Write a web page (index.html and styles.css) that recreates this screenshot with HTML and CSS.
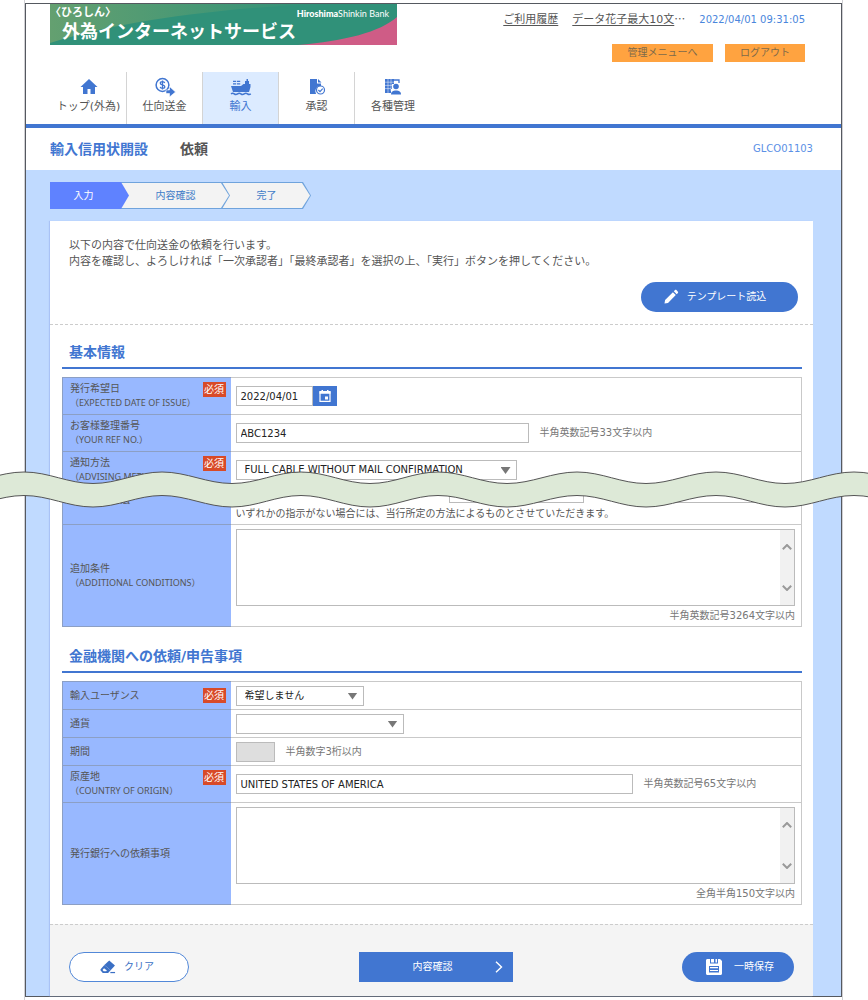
FILE: index.html
```html
<!DOCTYPE html>
<html lang="ja">
<head>
<meta charset="utf-8">
<meta name="viewport" content="width=device-width, initial-scale=1">
<title>輸入信用状開設 依頼</title>
<link rel="stylesheet" href="styles.css">
</head>
<body>
<div class="sheet">
<div class="frame">
  <header class="header">
    <div class="brand">
      <svg class="brand-bg" viewBox="0 0 347 41" preserveAspectRatio="none" aria-hidden="true">
        <defs><linearGradient id="leaf" x1="0" y1="0" x2="1" y2="0"><stop offset="0" stop-color="#64a070"/><stop offset="1" stop-color="#2f9179"/></linearGradient></defs>
        <rect width="347" height="41" fill="#309179"/>
        <path d="M0 0H270C190 3 80 14 0 39Z" fill="url(#leaf)"/>
        <path d="M347 13C330 28 295 37 248 41H347Z" fill="#cf5c86"/>
      </svg>
      <div class="brand-text">
        <div class="brand-row"><span class="brand-sub">〈ひろしん〉</span><span class="brand-bank"><b>Hiroshima</b>Shinkin Bank</span></div>
        <div class="brand-name">外為インターネットサービス</div>
      </div>
    </div>
    <div class="account">
      <div class="account-links">
        <a href="#">ご利用履歴</a>
        <span><a href="#">データ花子最大10文</a><span class="more">…</span></span>
        <time class="clock">2022/04/01 09:31:05</time>
      </div>
      <div class="account-buttons">
        <button type="button" class="orange orange-wide">管理メニューへ</button>
        <button type="button" class="orange">ログアウト</button>
      </div>
    </div>
  </header>

  <nav class="nav">
    <a href="#" class="tab">
      <svg width="22" height="20" viewBox="0 0 22 20" aria-hidden="true"><path d="M11 2 2.500 10H5v7h4.500v-5h3v5H17v-7h2.500Z" fill="#4176d1"/></svg>
      <span>トップ(外為)</span></a>
    <a href="#" class="tab">
      <svg width="22" height="20" viewBox="0 0 22 20" aria-hidden="true"><circle cx="8.500" cy="8" r="6.400" fill="none" stroke="#4176d1" stroke-width="1.500"/><path d="M10.700 6C10.400 5 9.600 4.700 8.500 4.700 7.100 4.700 6.300 5.300 6.300 6.300 6.300 8.600 10.800 7.300 10.800 9.700 10.800 10.800 9.900 11.300 8.500 11.300 7.300 11.300 6.400 10.900 6.200 9.900M8.500 3.500v9" fill="none" stroke="#4176d1" stroke-width="1.300"/><path d="M12 13h3.500v-3.500l6 5.500-6 5v-3.500H12Z" fill="#4176d1" stroke="#fff" stroke-width=".6"/></svg>
      <span>仕向送金</span></a>
    <a href="#" class="tab tab-active" aria-current="page">
      <svg width="22" height="20" viewBox="0 0 22 20" aria-hidden="true"><path d="M1 9h10l2.500-2H15V4h1.500V2H18v2h1v3h1.500v3L19 15H3Z" fill="#4176d1"/><path d="M3 4.300h8M3 6.800h8" stroke="#4176d1" stroke-width="1.300" stroke-dasharray="3.200 .8"/><path d="M1 16.800q1.700-1.300 3.300 0t3.300 0 3.300 0 3.300 0 3.300 0 3.300 0" fill="none" stroke="#4176d1" stroke-width="1.500"/></svg>
      <span>輸入</span></a>
    <a href="#" class="tab">
      <svg width="22" height="20" viewBox="0 0 22 20" aria-hidden="true"><path d="M4 2h7v4.500h4V9a5.300 5.300 0 0 0-5 8H4Z" fill="#4176d1"/><path d="M12 2l3.500 3.500H12Z" fill="#4176d1"/><circle cx="14.500" cy="13" r="4" fill="#fff" stroke="#4176d1" stroke-width="1.200"/><path d="m12.400 13 1.600 1.600 2.700-3" fill="none" stroke="#4176d1" stroke-width="1.200"/></svg>
      <span>承認</span></a>
    <a href="#" class="tab tab-last">
      <svg width="22" height="20" viewBox="0 0 22 20" aria-hidden="true"><path d="M3 2h9v5h-2v5H9v4H3Z" fill="#4176d1"/><path d="M3 5.200h9M3 8.400h7M3 11.600h6M6 2v14M9 2v12" stroke="#fff" stroke-width=".5"/><path d="M12 3h5v3" fill="none" stroke="#4176d1" stroke-width="1.300"/><circle cx="14" cy="9.500" r="2.800" fill="#4176d1"/><path d="M9 17.500c0-3 2-4 5-4s5 1 5 4Z" fill="#4176d1"/></svg>
      <span>各種管理</span></a>
  </nav>

  <div class="titlebar">
    <h1 class="title">輸入信用状開設<span class="title-kind">依頼</span></h1>
    <span class="screen-id">GLCO01103</span>
  </div>

  <main class="main">
    <ol class="steps">
      <li class="step step-now"><span>入力</span></li>
      <li class="step step-mid"><span>内容確認</span></li>
      <li class="step step-end"><span>完了</span></li>
    </ol>

    <form class="panel">
      <div class="intro">
        <p>以下の内容で仕向送金の依頼を行います。<br>内容を確認し、よろしければ「一次承認者」「最終承認者」を選択の上、「実行」ボタンを押してください。</p>
        <button type="button" class="pill pill-template">
          <svg width="16" height="16" viewBox="0 0 16 16" aria-hidden="true"><path d="M1.500 14.500l.6-3.500 7.800-7.800 2.900 2.900L5 13.900ZM10.800 2.300l1-1c.6-.6 1.200-.6 1.800 0l1.100 1.100c.6.6.6 1.200 0 1.800l-1 1Z" fill="#fff"/></svg>
          テンプレート読込</button>
      </div>

      <section class="section">
        <h2 class="heading">基本情報</h2>
        <table class="grid">
          <tr class="row-tall">
            <th scope="row"><div class="label"><label for="issue">発行希望日<small>（EXPECTED DATE OF ISSUE）</small></label><em class="must">必須</em></div></th>
            <td><div class="field joined"><input id="issue" class="box w-date" value="2022/04/01"><button type="button" class="calendar" aria-label="カレンダー"><svg width="12" height="12" viewBox="0 0 12 12" aria-hidden="true"><path d="M1 1.500h10V11.300H1Z" fill="none" stroke="#fff" stroke-width="1.200"/><path d="M.5 1.500h11v2.300H.5ZM2.500 0h1.500v2H2.500ZM8 0h1.500v2H8ZM6 6.500h3v3H6Z" fill="#fff"/></svg></button></div></td>
          </tr>
          <tr class="row-tall">
            <th scope="row"><div class="label"><label for="ref">お客様整理番号<small>（YOUR REF NO.）</small></label></div></th>
            <td><div class="field"><input id="ref" class="box w-ref" value="ABC1234"><span class="hint">半角英数記号33文字以内</span></div></td>
          </tr>
          <tr class="row-tall">
            <th scope="row"><div class="label"><label for="advise">通知方法<small>（ADVISING METHOD）</small></label><em class="must">必須</em></div></th>
            <td><div class="field"><span class="pick w-advise"><select id="advise"><option>FULL CABLE WITHOUT MAIL CONFIRMATION</option></select></span></div></td>
          </tr>
          <tr class="row-cut">
            <th scope="row"><div class="label"><label for="way">書類送付方法</label></div></th>
            <td><div class="cut-inputs"><input id="way" class="box"><input class="box" aria-label="送付方法の指定"></div><p class="note">いずれかの指示がない場合には、当行所定の方法によるものとさせていただきます。</p></td>
          </tr>
          <tr>
            <th scope="row"><div class="label"><label for="cond">追加条件<small>（ADDITIONAL CONDITIONS）</small></label></div></th>
            <td><div class="area"><textarea id="cond"></textarea><div class="scroll" aria-hidden="true"><svg width="10" height="6" viewBox="0 0 10 6"><path d="M.8 5.200 5 1l4.200 4.200"/></svg><svg width="10" height="6" viewBox="0 0 10 6"><path d="M.8.8 5 5 9.200.8"/></svg></div></div><p class="hint hint-right">半角英数記号3264文字以内</p></td>
          </tr>
        </table>
      </section>

      <section class="section section-next">
        <h2 class="heading">金融機関への依頼/申告事項</h2>
        <table class="grid">
          <tr class="row-short">
            <th scope="row"><div class="label"><label for="usance">輸入ユーザンス</label><em class="must">必須</em></div></th>
            <td><div class="field"><span class="pick w-usance"><select id="usance"><option>希望しません</option></select></span></div></td>
          </tr>
          <tr class="row-short">
            <th scope="row"><div class="label"><label for="cur">通貨</label></div></th>
            <td><div class="field"><span class="pick w-cur"><select id="cur"><option></option></select></span></div></td>
          </tr>
          <tr class="row-short">
            <th scope="row"><div class="label"><label for="term">期間</label></div></th>
            <td><div class="field"><input id="term" class="box w-term" disabled><span class="hint">半角数字3桁以内</span></div></td>
          </tr>
          <tr class="row-tall">
            <th scope="row"><div class="label"><label for="origin">原産地<small>（COUNTRY OF ORIGIN）</small></label><em class="must">必須</em></div></th>
            <td><div class="field"><input id="origin" class="box w-origin" value="UNITED STATES OF AMERICA"><span class="hint">半角英数記号65文字以内</span></div></td>
          </tr>
          <tr>
            <th scope="row"><div class="label"><label for="req">発行銀行への依頼事項</label></div></th>
            <td><div class="area"><textarea id="req"></textarea><div class="scroll" aria-hidden="true"><svg width="10" height="6" viewBox="0 0 10 6"><path d="M.8 5.200 5 1l4.200 4.200"/></svg><svg width="10" height="6" viewBox="0 0 10 6"><path d="M.8.8 5 5 9.200.8"/></svg></div></div><p class="hint hint-right">全角半角150文字以内</p></td>
          </tr>
        </table>
      </section>

      <div class="actions">
        <button type="reset" class="pill pill-clear">
          <svg width="16" height="14" viewBox="0 0 17 14" aria-hidden="true"><path d="M9.800.2 15.900 5.400 11.300 10.500 4.600 4.900Z" fill="#3a6fc4"/><path d="M4.600 4.900.9 9.200c-.6.700-.6 1.300 0 1.900L3 13.500h5.600l2.700-3Z" fill="#3a6fc4"/><path d="M4.300 8.200 7.300 10.700 6.600 11.600H3.900L2.700 10.200Z" fill="#fff"/><path d="M11 12.900h5" stroke="#3a6fc4" stroke-width="1.300"/></svg>
          クリア</button>
        <button type="button" class="confirm"><span>内容確認</span><svg width="8" height="12" viewBox="0 0 8 12" aria-hidden="true"><path d="M1 .8 6.500 6 1 11.200" fill="none" stroke="#fff" stroke-width="1.400"/></svg></button>
        <button type="button" class="pill pill-save">
          <svg width="16" height="16" viewBox="0 0 16 16" aria-hidden="true"><path d="M0 1.500C0 .6.600 0 1.500 0H4v4.500h8V0h2L16 2v12.500c0 .9-.6 1.500-1.500 1.500h-13C.6 16 0 15.400 0 14.500Z" fill="#fff"/><path d="M5 0h3v3.500H5ZM9.500 0H11v3.500H9.500Z" fill="#fff"/><path d="M3 7h10v6.500H3Z" fill="#4176d1"/><path d="M4 8.700h8M4 11.500h8" stroke="#fff" stroke-width="1.200"/></svg>
          一時保存</button>
      </div>
    </form>
  </main>
</div>
</div>
<svg class="wave" viewBox="0 0 868 40" preserveAspectRatio="none" aria-hidden="true">
  <path d="M-45 13.500C-20 13.500-1 2 24 2S68 13.500 93 13.500 137 2 162 2 207 13.500 232 13.500 276 2 301 2 345 13.500 370 13.500 413 2 438 2 482 13.500 507 13.500 552 2 577 2 621 13.500 646 13.500 691 2 716 2 760 13.500 785 13.500 829 2 854 2 898 13.500 923 13.500V37C898 37 879 25.500 854 25.500S810 37 785 37 741 25.500 716 25.500 671 37 646 37 602 25.500 577 25.500 532 37 507 37 463 25.500 438 25.500 395 37 370 37 326 25.500 301 25.500 257 37 232 37 187 25.500 162 25.500 118 37 93 37 49 25.500 24 25.500-20 37-45 37Z" fill="#dde9d7" stroke="#555" stroke-width="1"/>
</svg>
</body>
</html>
```

FILE: styles.css
```css
* { box-sizing: border-box; }

body {
  margin: 0;
  position: relative;
  overflow-x: hidden;
  background: #fff;
  color: #555;
  font: 10px/14px "DejaVu Sans", "Noto Sans CJK JP", sans-serif;
}

button, input, select, textarea {
  margin: 0;
  font: inherit;
  color: inherit;
  border-radius: 0;
}

button { border: 0; padding: 0; cursor: pointer; }
p, h1, h2, ol { margin: 0; padding: 0; }

.sheet {
  margin: 0 25px 0 24px;
  padding: 3px 0;
  border: solid #d0d0d4;
  border-width: 0 1px;
}

.frame { border: 1px solid #555960; }

/* header */
.header { display: flex; justify-content: space-between; padding: 0 36px 0 24px; }

.brand { position: relative; width: 347px; height: 41px; color: #fff; }
.brand-bg { position: absolute; inset: 0; width: 100%; height: 100%; }
.brand-text { position: relative; font-weight: bold; }
.brand-row { display: flex; justify-content: space-between; padding-right: 8px; height: 17px; line-height: 17px; }
.brand-sub { font-size: 11px; }
.brand-bank { font: 9px/20px Lato, sans-serif; }
.brand-bank b { font-weight: 900; }
.brand-name { padding-left: 12px; font-size: 18px; line-height: 22px; }

.account { padding-top: 8px; }
.account-links { display: flex; justify-content: flex-end; gap: 14px; height: 16px; font-size: 11px; line-height: 16px; }
.account-links a { color: #555; text-underline-offset: 2px; }
.more { font-family: "Noto Sans CJK JP", sans-serif; line-height: 1px; }
.clock { font-size: 10px; color: #4a86dc; }
.account-buttons { display: flex; justify-content: flex-end; gap: 12px; margin-top: 16px; }
.orange { width: 80px; height: 18px; background: #ffa340; color: #7d6a4a; }
.orange-wide { width: 101px; }

/* navigation */
.nav { display: flex; margin-top: 10px; padding-left: 25px; border-bottom: 4px solid #4176d1; }
.tab {
  display: flex;
  flex-direction: column;
  align-items: center;
  gap: 3px;
  width: 76px;
  height: 52px;
  padding-top: 5px;
  border-right: 1px solid #d4d4d4;
  color: #555;
  font-size: 11px;
  white-space: nowrap;
  text-decoration: none;
}
.tab-active { background: #dcebff; color: #4176d1; }
.tab-last { border-right: 0; }

.titlebar { display: flex; align-items: center; justify-content: space-between; height: 42px; padding: 0 28px 0 24px; }
.title { font-size: 14px; line-height: 20px; color: #4176d1; }
.title-kind { margin-left: 32px; color: #555; }
.screen-id { color: #5b90e6; }

/* body */
.main { padding: 12px 28px 0 24px; background: #c0daff; }

.steps { display: flex; list-style: none; line-height: 27px; text-align: center; color: #3f7cc8; }
.step {
  position: relative;
  height: 27px;
  background: #6fa3dc;
  clip-path: polygon(0 0, calc(100% - 8px) 0, 100% 50%, calc(100% - 8px) 100%, 0 100%);
}
.step span {
  display: block;
  background: #f3f3f3;
  clip-path: polygon(0 1px, calc(100% - 9px) 1px, calc(100% - 1px) 50%, calc(100% - 9px) calc(100% - 1px), 0 calc(100% - 1px));
}
.step-now { z-index: 3; width: 79px; background: #5f82ff; color: #fff; }
.step-now span { padding-right: 12px; background: #5f82ff; }
.step-mid { z-index: 2; width: 109px; margin-left: -8px; }
.step-end { width: 89px; margin-left: -8px; }

.panel { margin-top: 12px; background: #fff; box-shadow: -1px 0 1px #a9c2f5; }

.intro { padding: 17px 15px 12px 19px; border-bottom: 1px dashed #ccc; font-size: 11px; line-height: 16px; }
.intro .pill { margin: 12px 0 0 auto; }

.pill {
  display: flex;
  align-items: center;
  justify-content: center;
  gap: 8px;
  height: 30px;
  border-radius: 15px;
  background: #4176d1;
  color: #fff;
  font-size: 10px;
}
.pill-template { width: 157px; padding-right: 10px; }
.pill-clear { width: 120px; padding-right: 4px; border: 1px solid #5288d8; background: #fff; color: #3a6fc4; }
.pill-save { width: 112px; gap: 12px; padding-left: 4px; }

.section { padding: 17px 11px 0 12px; }
.section-next { padding-top: 19px; padding-bottom: 19px; }
.heading { padding: 0 7px 5px; border-bottom: 2px solid #4176d1; font-size: 14px; line-height: 20px; color: #4176d1; }

.grid { width: 100%; margin-top: 8px; border-collapse: collapse; table-layout: fixed; }
.grid th { width: 168px; padding: 0; border: 1px solid #8c9fc4; border-right: 0; background: #98b8ff; font-weight: normal; text-align: left; }
.grid td { padding: 4px 6px 3px 5px; border: 1px solid #c9c9c9; border-left: 0; }
.grid .row-tall > * { height: 37px; padding-top: 0; padding-bottom: 0; }
.grid .row-short > * { height: 28px; padding-top: 0; padding-bottom: 0; }

.label { display: flex; justify-content: space-between; align-items: flex-start; padding: 0 5px 0 7px; }
.label small { display: block; margin-right: -40px; font: 9px/14px "Noto Sans", "Noto Sans CJK JP", sans-serif; white-space: nowrap; }
.must { width: 23px; height: 15px; background: #d84a28; color: #fff; font-style: normal; line-height: 15px; text-align: center; flex: none; }
.row-short .label { align-items: center; }

.field { display: flex; align-items: center; gap: 11px; }
.joined { gap: 0; }
.box { height: 20px; padding: 0 4px; border: 1px solid #bbb; background: #fff; color: #222; }
.box:disabled { background: #dedede; }
.w-date { width: 77px; }
.w-ref { width: 293px; }
.w-origin { width: 397px; }
.w-term { width: 39px; }
.w-advise { width: 281px; }
.w-usance { width: 128px; }
.w-cur { width: 168px; }
.calendar { display: flex; align-items: center; justify-content: center; width: 24px; height: 20px; background: #4176d1; }

.pick { position: relative; display: block; }
.pick select { display: block; width: 100%; height: 20px; padding: 0 24px 0 8px; border: 1px solid #bbb; background: #fff; color: #222; appearance: none; }
.pick::after {
  content: "";
  position: absolute;
  right: 6px;
  top: 7px;
  width: 10px;
  height: 7px;
  background: #777;
  clip-path: polygon(0 0, 100% 0, 50% 100%);
  pointer-events: none;
}

.hint { color: #777; }
.hint-right { margin-top: 2px; text-align: right; line-height: 15px; }
.note { line-height: 15px; margin-top: 3px; }

.grid .row-cut th { padding-top: 4px; vertical-align: top; }
.grid .row-cut td { padding-top: 0; padding-bottom: 3px; }
.cut-inputs { display: flex; gap: 90px; padding-left: 213px; }
.cut-inputs .box { width: 135px; height: 14px; }
.cut-inputs .box + .box { width: 90px; }

.area { display: flex; height: 77px; border: 1px solid #bbb; }
.area textarea { flex: 1; min-width: 0; padding: 4px; border: 0; resize: none; background: #fff; }
.scroll { display: flex; flex-direction: column; justify-content: space-between; align-items: center; width: 14px; padding: 14px 0; background: #f1f1f1; }
.scroll path { fill: none; stroke: #999; stroke-width: 2; }

.actions {
  display: flex;
  justify-content: space-between;
  align-items: center;
  padding: 27px 19px 14px;
  border-top: 1px dashed #ccc;
  background: #f4f4f4;
}
.confirm { display: flex; align-items: center; justify-content: space-between; width: 154px; height: 30px; padding: 0 10px 0 54px; background: #4176d1; color: #fff; }

/* cut mark across the form */
.wave { position: absolute; left: 0; top: 470px; width: 100%; height: 40px; }
```
